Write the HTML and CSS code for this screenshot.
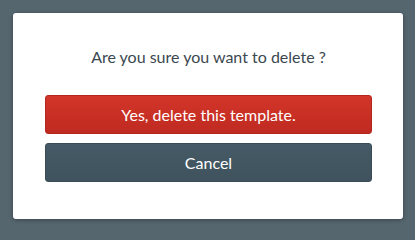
FILE: index.html
```html
<!DOCTYPE html>
<html>
<head>
<meta charset="utf-8">
<link rel="stylesheet" href="styles.css">
</head>
<body>
<div class="page">
  <div class="modal">
    <p class="question">Are you sure you want to delete ?</p>
    <div class="actions">
      <button class="btn btn-danger">Yes, delete this template.</button>
      <button class="btn btn-cancel">Cancel</button>
    </div>
  </div>
</div>
</body>
</html>
```
FILE: styles.css
```css
html, body {
  margin: 0;
  padding: 0;
}
body {
  width: 415px;
  height: 234px;
  background: #56666f;
  font-family: Lato, "Open Sans", sans-serif;
  overflow: hidden;
}
.page {
  padding: 13px 12px 0 13px;
}
.modal {
  width: 390px;
  height: 206px;
  box-sizing: border-box;
  background: #ffffff;
  border-radius: 3px;
  box-shadow: 0 1px 4px rgba(0, 0, 0, 0.35);
  padding: 34px 31px 0 32px;
}
.question {
  margin: 0;
  text-align: center;
  font-size: 16px;
  line-height: 20px;
  color: #3b4850;
}
.actions {
  margin-top: 28px;
  display: flex;
  flex-direction: column;
  gap: 9px;
}
.btn {
  height: 39px;
  width: 100%;
  border-radius: 3px;
  font-family: Lato, "Open Sans", sans-serif;
  font-size: 16px;
  color: #ffffff;
  cursor: pointer;
  padding: 0 0 1px;
}
.btn-danger {
  background: linear-gradient(#d3352a, #bf2a20);
  border: 1px solid #b3271e;
}
.btn-cancel {
  background: linear-gradient(#465b67, #3f525d);
  border: 1px solid #3a4b55;
}
```
